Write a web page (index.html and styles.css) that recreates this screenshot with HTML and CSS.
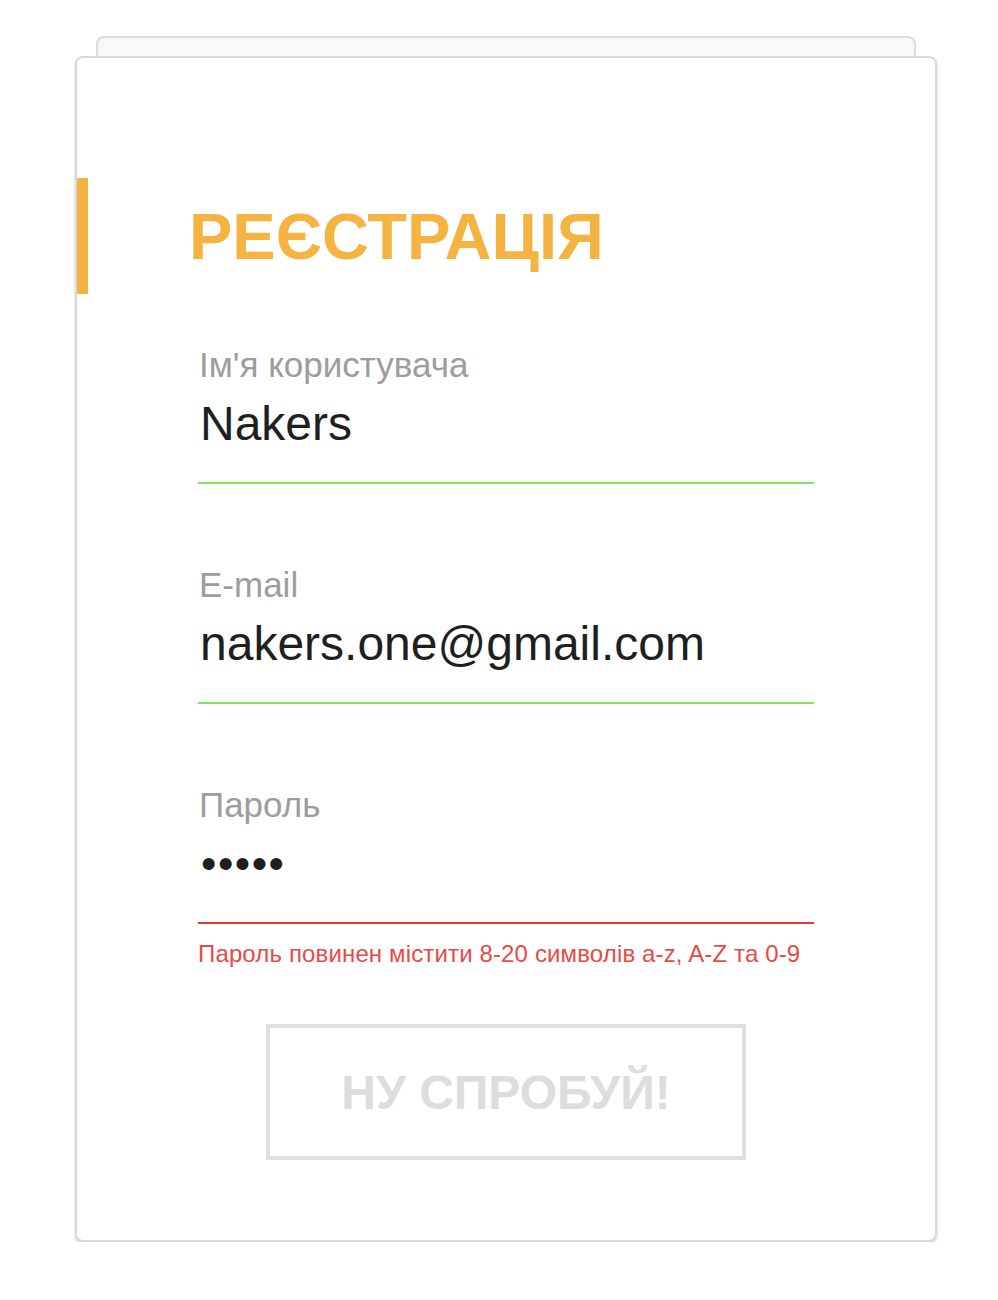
FILE: index.html
```html
<!DOCTYPE html>
<html lang="uk">
<head>
<meta charset="utf-8">
<title>Реєстрація</title>
<link rel="stylesheet" href="styles.css">
</head>
<body>
<div class="page">
  <div class="stack"></div>
  <div class="card">
    <div class="header">
      <h1 class="title">РЕЄСТРАЦІЯ</h1>
    </div>
    <form class="form">
      <div class="field ok">
        <div class="label">Ім'я користувача</div>
        <div class="value">Nakers</div>
      </div>
      <div class="field ok">
        <div class="label">E-mail</div>
        <div class="value">nakers.one@gmail.com</div>
      </div>
      <div class="field bad">
        <div class="label">Пароль</div>
        <div class="value dots">•••••</div>
      </div>
      <div class="error">Пароль повинен містити 8-20 символів a-z, A-Z та 0-9</div>
      <button type="button" class="submit">НУ СПРОБУЙ!</button>
    </form>
  </div>
</div>
</body>
</html>
```

FILE: styles.css
```css
* { box-sizing: border-box; }
html, body { margin: 0; padding: 0; background: #fff; }
body { font-family: "Liberation Sans", Arial, Helvetica, sans-serif; }

.page {
  padding: 36px 0 0 75px;
}

.stack {
  margin-left: 21px;
  width: 820px;
  height: 20px;
  background: #f8f8f8;
  border: 2px solid #dcdcdc;
  border-bottom: none;
  border-radius: 8px 8px 0 0;
}

.card {
  width: 862px;
  background: #fff;
  border: 2px solid #d9d9d9;
  border-radius: 8px;
  box-shadow: 0 2px 3px rgba(0, 0, 0, 0.18);
  padding: 120px 0 80px;
}

.header {
  height: 116px;
  border-left: 11px solid #f5b342;
  display: flex;
  align-items: center;
  padding-left: 101px;
}

.title {
  margin: 0;
  font-size: 65px;
  line-height: 1;
  font-weight: 700;
  color: #f5b342;
}

.form {
  width: 616px;
  margin: 51px auto 0;
}

.field {
  padding-bottom: 30px;
  border-bottom: 2px solid #7ee65b;
}
.field + .field { margin-top: 81px; }
.field.bad { border-bottom-color: #e4372f; }

.label {
  font-size: 35px;
  line-height: 40px;
  color: #9d9d9d;
  padding-left: 1px;
}

.value {
  margin-top: 11px;
  font-size: 48px;
  line-height: 56px;
  color: #1f1f1f;
  padding-left: 2px;
}

.dots {
  font-size: 44px;
  letter-spacing: 1.5px;
  padding-left: 3px;
}

.error {
  margin-top: 16px;
  font-size: 24px;
  line-height: 28px;
  letter-spacing: 0.14px;
  color: #e94a47;
}

.submit {
  display: block;
  width: 480px;
  height: 136px;
  margin: 56px auto 0;
  background: #fff;
  border: 4px solid #e1e1e1;
  font-family: inherit;
  font-size: 48px;
  font-weight: 700;
  color: #dddddd;
  padding: 0;
}
```
